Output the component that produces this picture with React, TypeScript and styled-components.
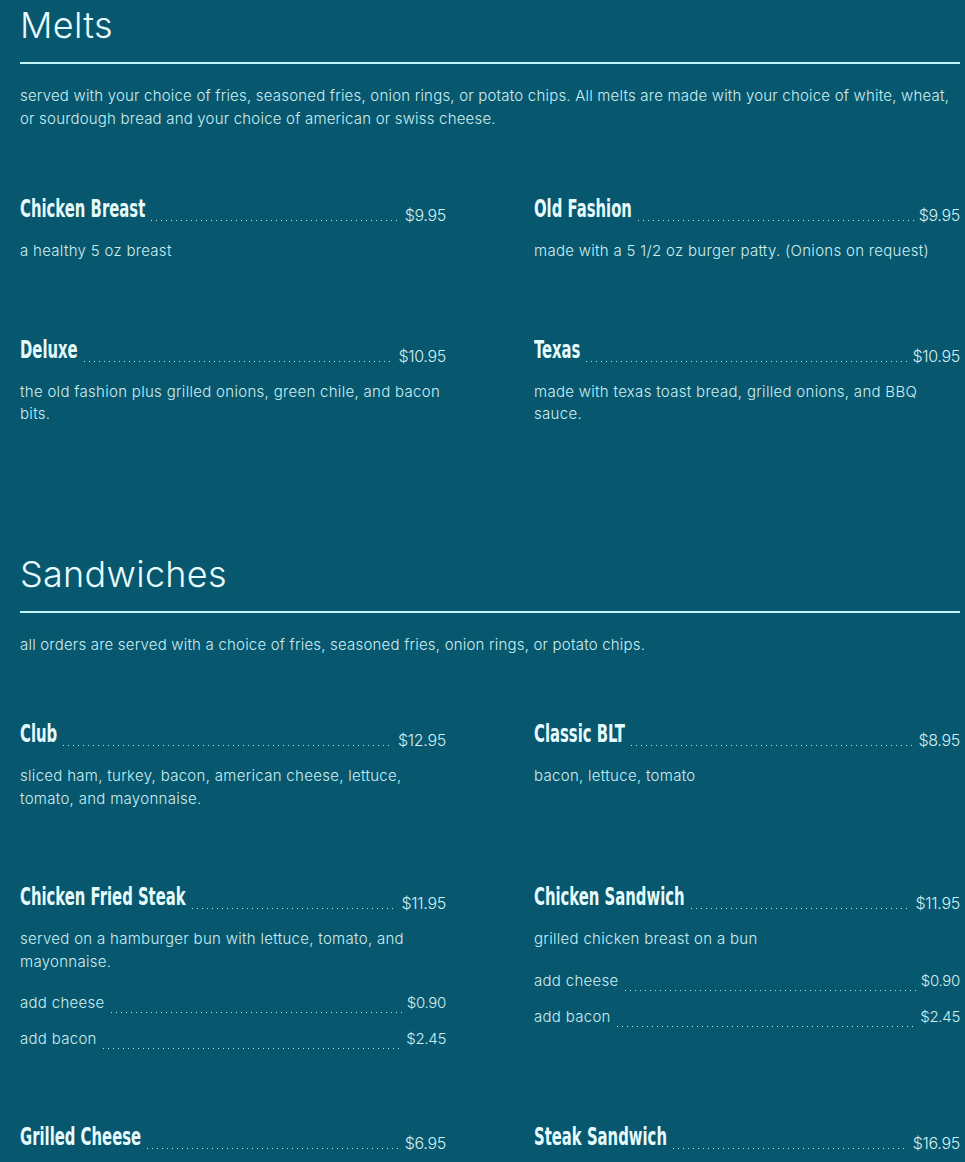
import React from "react";
import styled, { createGlobalStyle } from "styled-components";

const Global = createGlobalStyle`
  html, body { margin: 0; padding: 0; background: #07576f; }
  body { font-family: Inter, "Noto Sans", sans-serif; color: #d4f1f4; }
`;

const Page = styled.main`
  padding: 0 5px 40px 20px;
  display: flex;
  flex-direction: column;
  gap: 123px;
`;

const Section = styled.section`
  display: flex;
  flex-direction: column;
`;

const Title = styled.h2`
  margin: 0;
  font-family: Inter, "Noto Sans", sans-serif;
  font-weight: 300;
  font-size: 36px;
  line-height: 50px;
  letter-spacing: 0.3px;
  color: #e8fbfd;
`;

const Rule = styled.hr`
  margin: 12px 0 0;
  border: 0;
  height: 2px;
  background: #bff3f5;
`;

const Intro = styled.p`
  margin: 21px 0 0;
  font-size: 15px;
  font-weight: 300;
  line-height: 22.5px;
  letter-spacing: 0.2px;
  color: #cdeef2;
`;

const Grid = styled.div<{ $top: number }>`
  margin-top: ${(p) => p.$top}px;
  display: grid;
  grid-template-columns: 1fr 1fr;
  column-gap: 88px;
  row-gap: 80px;
`;

const Item = styled.div`
  display: flex;
  flex-direction: column;
`;

const Head = styled.div`
  display: flex;
  align-items: flex-end;
`;

const Name = styled.span`
  font-family: "DejaVu Sans Condensed", "DejaVu Sans", sans-serif;
  font-stretch: condensed;
  font-weight: 700;
  font-size: 16.5px;
  line-height: 20px;
  color: #e6fbfd;
  display: inline-block;
  transform: scaleY(1.5);
  transform-origin: 0 15.7px;
  white-space: nowrap;
`;

const Leader = styled.span`
  flex: 1;
  align-self: flex-end;
  height: 1px;
  margin: 0 5px 1px 6px;
  background-image: linear-gradient(to right, #bfe6ec 1px, transparent 1px);
  background-size: 5px 1px;
  background-repeat: repeat-x;
`;

const Price = styled.span`
  font-size: 16px;
  line-height: 16px;
  font-weight: 300;
  color: #d4f1f4;
  letter-spacing: -0.3px;
  margin-bottom: -1px;
`;

const Desc = styled.p`
  margin: 18px 0 0;
  font-size: 15px;
  font-weight: 300;
  line-height: 22.5px;
  letter-spacing: 0.3px;
  color: #cdeef2;
`;

const Addons = styled.div`
  margin-top: 19px;
  display: flex;
  flex-direction: column;
  gap: 14px;
`;

const Addon = styled.div`
  display: flex;
  align-items: baseline;
  font-size: 15px;
  line-height: 22px;
  font-weight: 300;
  color: #cdeef2;
  letter-spacing: 0.3px;
`;

const AddonPrice = styled.span`
  font-size: 15px;
  letter-spacing: -0.3px;
`;

type Extra = { label: string; price: string };
type MenuItem = { name: string; price: string; desc?: string; extras?: Extra[] };
type MenuSection = { title: string; intro: string; gridTop: number; items: MenuItem[] };

const extras: Extra[] = [
  { label: "add cheese", price: "$0.90" },
  { label: "add bacon", price: "$2.45" },
];

const sections: MenuSection[] = [
  {
    title: "Melts",
    intro:
      "served with your choice of fries, seasoned fries, onion rings, or potato chips. All melts are made with your choice of white, wheat, or sourdough bread and your choice of american or swiss cheese.",
    gridTop: 72,
    items: [
      { name: "Chicken Breast", price: "$9.95", desc: "a healthy 5 oz breast" },
      { name: "Old Fashion", price: "$9.95", desc: "made with a 5 1/2 oz burger patty. (Onions on request)" },
      { name: "Deluxe", price: "$10.95", desc: "the old fashion plus grilled onions, green chile, and bacon bits." },
      { name: "Texas", price: "$10.95", desc: "made with texas toast bread, grilled onions, and BBQ sauce." },
    ],
  },
  {
    title: "Sandwiches",
    intro: "all orders are served with a choice of fries, seasoned fries, onion rings, or potato chips.",
    gridTop: 71,
    items: [
      { name: "Club", price: "$12.95", desc: "sliced ham, turkey, bacon, american cheese, lettuce, tomato, and mayonnaise." },
      { name: "Classic BLT", price: "$8.95", desc: "bacon, lettuce, tomato" },
      {
        name: "Chicken Fried Steak",
        price: "$11.95",
        desc: "served on a hamburger bun with lettuce, tomato, and mayonnaise.",
        extras,
      },
      { name: "Chicken Sandwich", price: "$11.95", desc: "grilled chicken breast on a bun", extras },
      { name: "Grilled Cheese", price: "$6.95" },
      { name: "Steak Sandwich", price: "$16.95" },
    ],
  },
];

export default function App() {
  return (
    <>
      <Global />
      <Page>
        {sections.map((s) => (
          <Section key={s.title}>
            <Title>{s.title}</Title>
            <Rule />
            <Intro>{s.intro}</Intro>
            <Grid $top={s.gridTop}>
              {s.items.map((it) => (
                <Item key={it.name}>
                  <Head>
                    <Name>{it.name}</Name>
                    <Leader />
                    <Price>{it.price}</Price>
                  </Head>
                  {it.desc && <Desc>{it.desc}</Desc>}
                  {it.extras && (
                    <Addons>
                      {it.extras.map((e) => (
                        <Addon key={e.label}>
                          <span>{e.label}</span>
                          <Leader />
                          <AddonPrice>{e.price}</AddonPrice>
                        </Addon>
                      ))}
                    </Addons>
                  )}
                </Item>
              ))}
            </Grid>
          </Section>
        ))}
      </Page>
    </>
  );
}
